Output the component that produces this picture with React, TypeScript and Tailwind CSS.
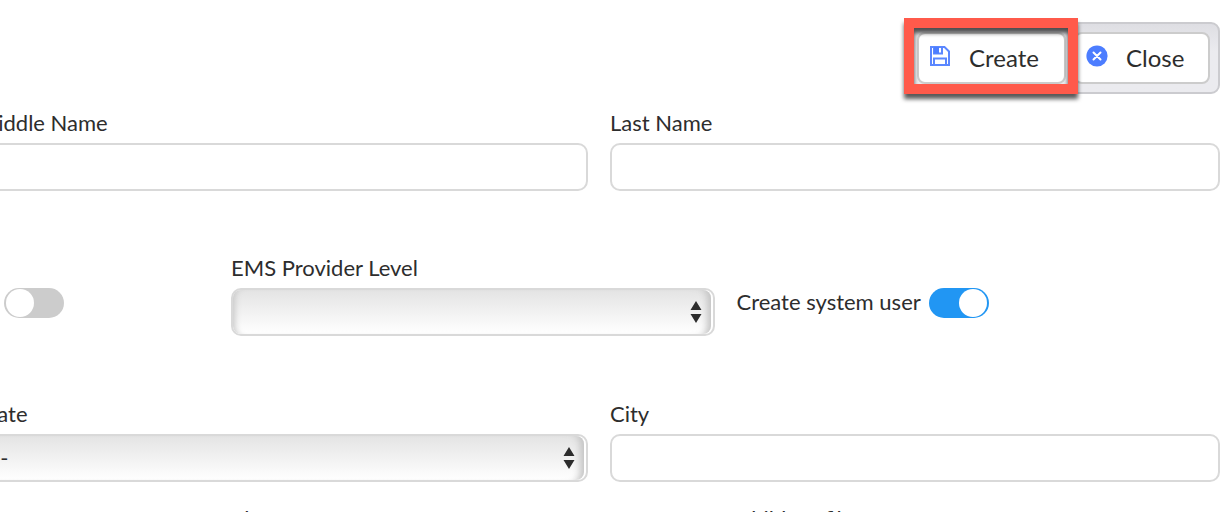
import React from "react";

const labelClass = "mb-[7px] block text-[22px] leading-[26px]";

function TextField({ id, label }: { id: string; label: string }) {
  return (
    <div className="min-w-0">
      <label htmlFor={id} className={labelClass}>
        {label}
      </label>
      <input
        id={id}
        type="text"
        className="block h-12 w-full rounded-[10px] border-2 border-[#d9d9d9] bg-white px-3 text-[22px] outline-none"
      />
    </div>
  );
}

function SelectField({ id, label, option }: { id: string; label: string; option: string }) {
  return (
    <div className="min-w-0">
      <label htmlFor={id} className={labelClass}>
        {label}
      </label>
      <div className="relative h-12 rounded-[10px] border-2 border-[#d9d9d9] bg-white pr-0.5">
        <select
          id={id}
          className="block h-full w-full appearance-none rounded-[8px] bg-linear-to-b from-[#e4e4e4] to-white pb-0.5 pl-3 text-[22px] shadow-[inset_8px_0_6px_-6px_#c8c8c8,inset_-9px_0_7px_-5px_#c4c4c4] outline-none"
        >
          <option>{option}</option>
        </select>
        <svg
          viewBox="0 0 12 22"
          className="pointer-events-none absolute top-[11px] right-[11px] h-[22px] w-3 fill-[#2d2d2d]"
          aria-hidden="true"
        >
          <path d="M6 0 11.5 9H.5zM6 22 .5 13h11z" />
        </svg>
      </div>
    </div>
  );
}

function Toggle({ id, label, defaultChecked }: { id: string; label?: string; defaultChecked?: boolean }) {
  return (
    <input
      id={id}
      type="checkbox"
      role="switch"
      aria-label={label}
      defaultChecked={defaultChecked}
      className="flex h-[30px] w-[60px] shrink-0 appearance-none items-center rounded-full bg-[#ccc] px-0.5 after:block after:size-7 after:rounded-full after:bg-white checked:justify-end checked:bg-[#2196f3]"
    />
  );
}

const actionClass =
  "flex h-[52px] items-center rounded-[8px] border-2 border-[#ccc] bg-white pl-2.5 text-[24px] leading-7";

function Toolbar() {
  return (
    <div className="flex justify-end">
      <div className="flex gap-2 rounded-[9px] border-2 border-[#cbcbcf] bg-linear-to-b from-[#dedee3] to-[#ebebef] to-40% p-2">
        <div className="relative">
          <button type="button" className={`${actionClass} w-[149px] gap-[18px]`}>
            <svg viewBox="0 0 22 22" className="-mt-1 size-[22px]" fill="none" stroke="#5b87ff" strokeWidth="2" aria-hidden="true">
              <path d="M2 2h13.5l4.500 4.500V20H2z" />
              <path d="M5 20v-6.500h12V20" />
              <path d="M5 2v6.500h8V2" />
              <path d="M5 2h5v6.500H5z" fill="#4c7dff" stroke="none" />
            </svg>
            Create
          </button>
          <span
            className="pointer-events-none absolute -top-3.5 -right-3 -bottom-2.5 -left-[13px] border-10 border-[#ff5a4b] drop-shadow-[0_5px_2px_rgba(0,0,0,0.65)]"
            aria-hidden="true"
          />
        </div>
        <button type="button" className={`${actionClass} w-[136px] gap-[18px]`}>
          <svg viewBox="0 0 22 22" className="-mt-1 size-[22px]" aria-hidden="true">
            <circle cx="11" cy="11" r="10.6" fill="#4c7dff" />
            <path d="m7.500 7.500 7 7m0-7-7 7" stroke="#fff" strokeWidth="2" strokeLinecap="round" />
          </svg>
          Close
        </button>
      </div>
    </div>
  );
}

export default function App() {
  return (
    <main className="h-screen overflow-hidden bg-white pt-[22px] pr-1.5 font-['Lato',sans-serif] text-[#2d2d2d]">
      <Toolbar />
      <form>
        <div className="mt-4 -ml-[22px] grid grid-cols-2 gap-[22px]">
          <TextField id="middle-name" label="Middle Name" />
          <TextField id="last-name" label="Last Name" />
        </div>

        <div className="mt-16 grid grid-cols-[209px_1fr_1fr] gap-[22px]">
          <div className="pt-[33px] pl-1">
            <Toggle id="active" label="Active" />
          </div>
          <SelectField id="provider-level" label="EMS Provider Level" option="" />
          <div className="flex items-start gap-2 pt-[33px]">
            <label htmlFor="system-user" className="text-[22px] leading-7">
              Create system user
            </label>
            <Toggle id="system-user" defaultChecked />
          </div>
        </div>

        <div className="mt-[65px] -ml-[22px] grid grid-cols-2 gap-[22px]">
          <SelectField id="state" label="State" option="--" />
          <TextField id="city" label="City" />
        </div>

        <div className="mt-6 grid grid-cols-[209px_1fr_1fr] gap-[22px]">
          <div />
          <TextField id="platform" label="Platform" />
          <TextField id="child-profile" label="Child profile" />
        </div>
      </form>
    </main>
  );
}
